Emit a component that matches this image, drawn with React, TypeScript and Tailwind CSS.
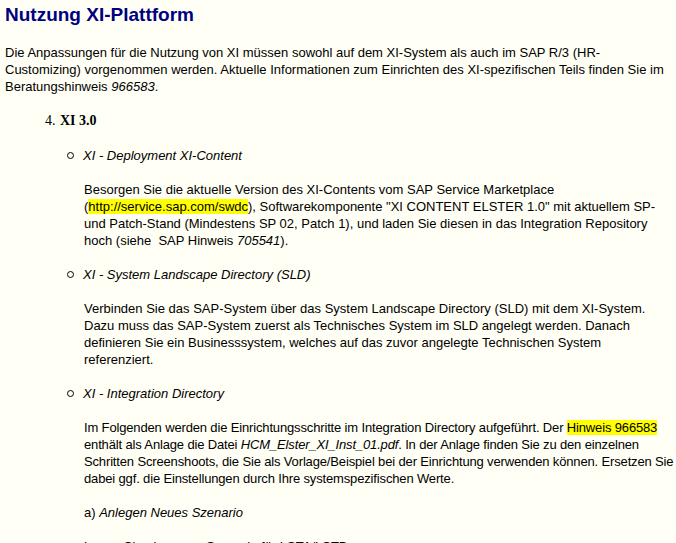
export default function App() {
  const hl = "bg-[#ffff00]";
  return (
    <div className="min-h-[543px] bg-[#fffff5] pl-[5px] pr-0 pt-[4px] text-[13px] leading-[17px] text-black" style={{ fontFamily: '"Liberation Sans", Arial, sans-serif' }}>
      <h1 className="text-[19px] leading-[22px] font-bold text-[#000080]">Nutzung XI-Plattform</h1>
      <p className="mt-[18px] pr-[5px]">
        Die Anpassungen für die Nutzung von XI müssen sowohl auf dem XI-System als auch im SAP R/3 (HR-Customizing) vorgenommen werden. Aktuelle Informationen zum Einrichten des XI-spezifischen Teils finden Sie im Beratungshinweis <i>966583</i>.
      </p>
      <div className="mt-[17px] pl-[40px]">
        <div className="flex" style={{ fontFamily: '"Liberation Serif", "Times New Roman", serif' }}>
          <span className="w-[13px] text-[14px]">4.</span>
          <b className="ml-[2px] text-[14px]">XI 3.0</b>
        </div>
        <div className="pl-[22px]">
          <div className="mt-[18px] flex items-center">
            <span className="mr-[9px] inline-block h-[7px] w-[7px] rounded-full border border-black"></span>
            <i>XI - Deployment XI-Content</i>
          </div>
          <p className="mt-[17px] pl-[17px] pr-[5px]">
            Besorgen Sie die aktuelle Version des XI-Contents vom SAP Service Marketplace (<span className={hl}>http://service.sap.com/swdc</span>), Softwarekomponente "XI CONTENT ELSTER 1.0" mit aktuellem SP- und Patch-Stand (Mindestens SP 02, Patch 1), und laden Sie diesen in das Integration Repository hoch (siehe&nbsp; SAP Hinweis <i>705541</i>).
          </p>
          <div className="mt-[17px] flex items-center">
            <span className="mr-[9px] inline-block h-[7px] w-[7px] rounded-full border border-black"></span>
            <i>XI - System Landscape Directory (SLD)</i>
          </div>
          <p className="mt-[17px] pl-[17px] pr-[5px]">
            Verbinden Sie das SAP-System über das System Landscape Directory (SLD) mit dem XI-System. Dazu muss das SAP-System zuerst als Technisches System im SLD angelegt werden. Danach definieren Sie ein Businesssystem, welches auf das zuvor angelegte Technischen System referenziert.
          </p>
          <div className="mt-[17px] flex items-center">
            <span className="mr-[9px] inline-block h-[7px] w-[7px] rounded-full border border-black"></span>
            <i>XI - Integration Directory</i>
          </div>
          <p className="mt-[17px] pl-[17px] tracking-[-0.15px]">
            Im Folgenden werden die Einrichtungsschritte im Integration Directory aufgeführt. Der <span className={hl}>Hinweis 966583</span> enthält als Anlage die Datei <i>HCM_Elster_XI_Inst_01.pdf</i>. In der Anlage finden Sie zu den einzelnen Schritten Screenshoots, die Sie als Vorlage/Beispiel bei der Einrichtung verwenden können. Ersetzen Sie dabei ggf. die Einstellungen durch Ihre systemspezifischen Werte.
          </p>
          <p className="mt-[17px] pl-[17px]">a) <i>Anlegen Neues Szenario</i></p>
          <p className="mt-[17px] pl-[17px]">Legen Sie ein neues Szenario für LSTA/LSTB an.</p>
        </div>
      </div>
    </div>
  );
}
